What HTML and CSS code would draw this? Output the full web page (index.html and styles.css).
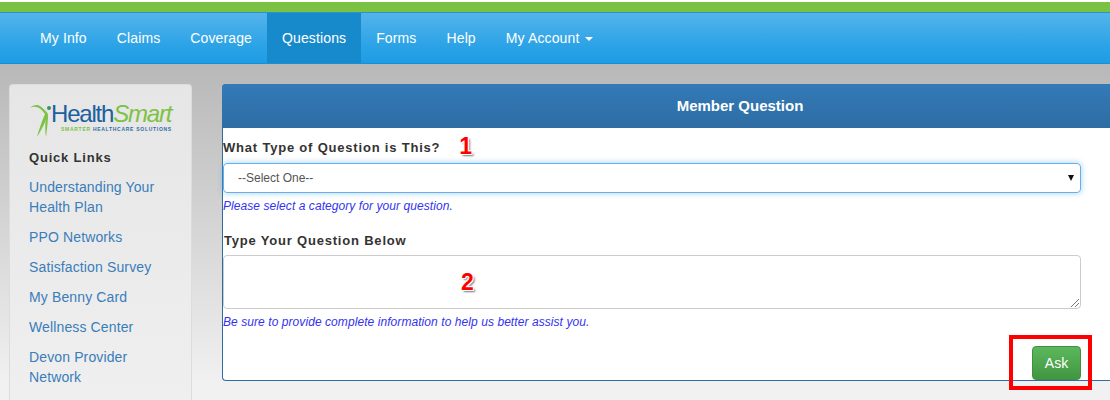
FILE: index.html
```html
<!DOCTYPE html>
<html lang="en">
<head>
<meta charset="utf-8">
<title>Member Question</title>
<link rel="stylesheet" href="styles.css">
</head>
<body>
<div class="topstrip"></div>
<nav class="navbar">
  <a class="navlink" href="#">My Info</a>
  <a class="navlink" href="#">Claims</a>
  <a class="navlink" href="#">Coverage</a>
  <a class="navlink active" href="#">Questions</a>
  <a class="navlink" href="#">Forms</a>
  <a class="navlink" href="#">Help</a>
  <a class="navlink" href="#">My Account <span class="caret"></span></a>
</nav>
<div class="content">
  <aside class="sidebar">
    <div class="logo">
      <svg class="logo-mark" width="24" height="38" viewBox="0 0 24 38">
        <path d="M0 8 C3 5 7 4 10 6 C13 8 16 11 18 14 C16 21 12 29 7 37 C9 29 12 21 15 14 C12 10 9 7 6 7 C4 6.500 2 7 0 8 Z" fill="#7cc243"/>
        <path d="M18 14 C18 21 17 29 16 37 C15 31 15 24 16 17 Z" fill="#7cc243"/>
        <circle cx="19" cy="8" r="2" fill="#3f8f5a"/>
      </svg>
      <div class="logo-text">
        <div class="logo-name"><span class="logo-health">Health</span><span class="logo-smart">Smart</span></div>
        <div class="logo-tag"><span class="tag-green">SMARTER</span> <span class="tag-blue">HEALTHCARE SOLUTIONS</span></div>
      </div>
    </div>
    <h4 class="quick-title">Quick Links</h4>
    <ul class="quick-list">
      <li><a href="#">Understanding Your Health Plan</a></li>
      <li><a href="#">PPO Networks</a></li>
      <li><a href="#">Satisfaction Survey</a></li>
      <li><a href="#">My Benny Card</a></li>
      <li><a href="#">Wellness Center</a></li>
      <li><a href="#">Devon Provider Network</a></li>
    </ul>
  </aside>
  <main class="panel">
    <div class="panel-head">Member Question</div>
    <form class="panel-body">
      <div class="label-row">
        <label class="field-label">What Type of Question is This?</label>
        <span class="marker marker-one">1</span>
      </div>
      <div class="select-box"><span>--Select One--</span><span class="select-arrow"></span></div>
      <p class="hint">Please select a category for your question.</p>
      <div class="label-row second">
        <label class="field-label">Type Your Question Below</label>
      </div>
      <div class="text-box">
        <span class="marker marker-two">2</span>
        <svg class="grip" width="10" height="10" viewBox="0 0 10 10"><path d="M1 9 9 1M5 9 9 5" stroke="#777" stroke-width="1" fill="none"/></svg>
      </div>
      <p class="hint">Be sure to provide complete information to help us better assist you.</p>
      <div class="actions">
        <button class="ask" type="button">Ask</button>
        <span class="red-box"></span>
      </div>
    </form>
  </main>
</div>
</body>
</html>
```

FILE: styles.css
```css
* { box-sizing: border-box; }
html, body { margin: 0; padding: 0; }
body {
  width: 1110px;
  height: 400px;
  overflow: hidden;
  font-family: "Liberation Sans", Arial, sans-serif;
  font-size: 14px;
  color: #333;
  background: linear-gradient(to bottom, #b8b8b8 64px, #f1f1f1 385px);
}
.topstrip {
  height: 13px;
  background: linear-gradient(to bottom, #ffffff 0, #ffffff 2px, #7bc143 2px, #7bc143 12px, #2a93c9 12px);
}
.navbar {
  display: flex;
  height: 51px;
  padding-left: 25px;
  background: linear-gradient(to bottom, #54b4eb, #2fa4e7 60%, #1d9ce5);
  border-bottom: 1px solid #1b8fd6;
}
.navlink {
  display: block;
  padding: 0 15px;
  line-height: 50px;
  color: #fff;
  text-decoration: none;
  font-size: 14px;
  letter-spacing: .125px;
}
.navlink.active { background: #178acc; }
.caret {
  display: inline-block;
  width: 0;
  height: 0;
  margin-left: 2px;
  vertical-align: middle;
  border-top: 4px solid #fff;
  border-left: 4px solid transparent;
  border-right: 4px solid transparent;
}
.content {
  display: flex;
  align-items: stretch;
  height: 336px;
  overflow: hidden;
  padding: 20px 0 0 9px;
  gap: 30px;
}
.sidebar {
  flex: none;
  width: 183px;
  padding: 15px 19px 0;
  background: linear-gradient(to bottom, #e6e6e6, #efefef);
  border: 1px solid #dcdcdc;
  border-bottom: 0;
  border-radius: 4px 4px 0 0;
}
.logo { display: flex; align-items: flex-start; height: 38px; margin-left: 1px; }
.logo-mark { flex: none; margin-right: -3px; }
.logo-name { font-size: 24px; line-height: 24px; margin-top: 2px; letter-spacing: -1.2px; white-space: nowrap; }
.logo-health { color: #1c5f9e; }
.logo-smart { color: #7cc243; font-style: italic; }
.logo-tag { font-size: 5px; line-height: 7px; font-weight: 700; letter-spacing: .72px; white-space: nowrap; margin-top: 0; margin-left: 10px; }
.tag-green { color: #7cc243; }
.tag-blue { color: #2e6da4; }
.quick-title { margin: 11px 0 0; font-size: 13px; line-height: 18px; font-weight: 700; letter-spacing: .8px; color: #333; }
.quick-list { list-style: none; margin: 10px 0 0; padding: 0; }
.quick-list li { font-size: 14px; line-height: 20px; margin-bottom: 10px; letter-spacing: .13px; }
.quick-list a { color: #3a7dba; text-decoration: none; }
.panel {
  flex: none;
  width: 1036px;
  height: 297px;
  background: #fff;
  border: 1px solid #2e6da4;
  border-right: 0;
  border-radius: 4px 0 0 4px;
}
.panel-head {
  height: 44px;
  margin: -1px 0 0 -1px;
  line-height: 44px;
  text-align: center;
  color: #fff;
  font-size: 15px;
  font-weight: 700;
  background: linear-gradient(to bottom, #337ab7, #2e6da4);
  border-radius: 4px 0 0 0;
}
.label-row { display: flex; height: 35px; align-items: center; }
.label-row.second { height: 42px; align-items: flex-end; padding-bottom: 7px; }
.field-label { font-size: 13px; font-weight: 700; letter-spacing: .8px; color: #333; padding-top: 4px; }
.label-row.second .field-label { padding-top: 0; padding-left: 1px; }
.marker {
  color: #f00;
  font-size: 23px;
  font-weight: 700;
  text-shadow: 1px 1px 0 #fff, -1px -1px 0 #fff, 1px -1px 0 #fff, -1px 1px 0 #fff, 2px 2px 2px #777;
}
.marker-one { margin-left: 19px; padding-top: 1px; }
.select-box {
  display: flex;
  justify-content: space-between;
  align-items: center;
  width: 858px;
  height: 30px;
  padding: 0 6px 0 14px;
  border: 1px solid #66afe9;
  border-radius: 4px;
  box-shadow: 0 0 6px rgba(102,175,233,.6);
  font-size: 12px;
  color: #555;
}
.select-arrow {
  width: 0;
  height: 0;
  border-top: 6px solid #111;
  border-left: 3.5px solid transparent;
  border-right: 3.5px solid transparent;
}
.hint { margin: 6px 0 0; font-size: 12px; line-height: 14px; font-style: italic; letter-spacing: .07px; color: #3333ee; }
.text-box {
  position: relative;
  display: flex;
  align-items: center;
  width: 858px;
  height: 54px;
  padding-left: 237px;
  border: 1px solid #ccc;
  border-radius: 4px;
}
.grip { position: absolute; right: 0; bottom: 0; }
.actions { position: relative; display: flex; justify-content: flex-end; width: 858px; margin-top: 17px; }
.ask {
  width: 49px;
  height: 34px;
  padding: 0;
  border: 1px solid #3e8f3e;
  border-radius: 4px;
  background: linear-gradient(to bottom, #5cb85c, #419641);
  color: #fff;
  font: 14px "Liberation Sans", Arial, sans-serif;
  font-weight: 400;
}
.red-box {
  position: absolute;
  right: -11px;
  top: -11px;
  width: 83px;
  height: 55px;
  border: 4px solid #f00;
}
```
